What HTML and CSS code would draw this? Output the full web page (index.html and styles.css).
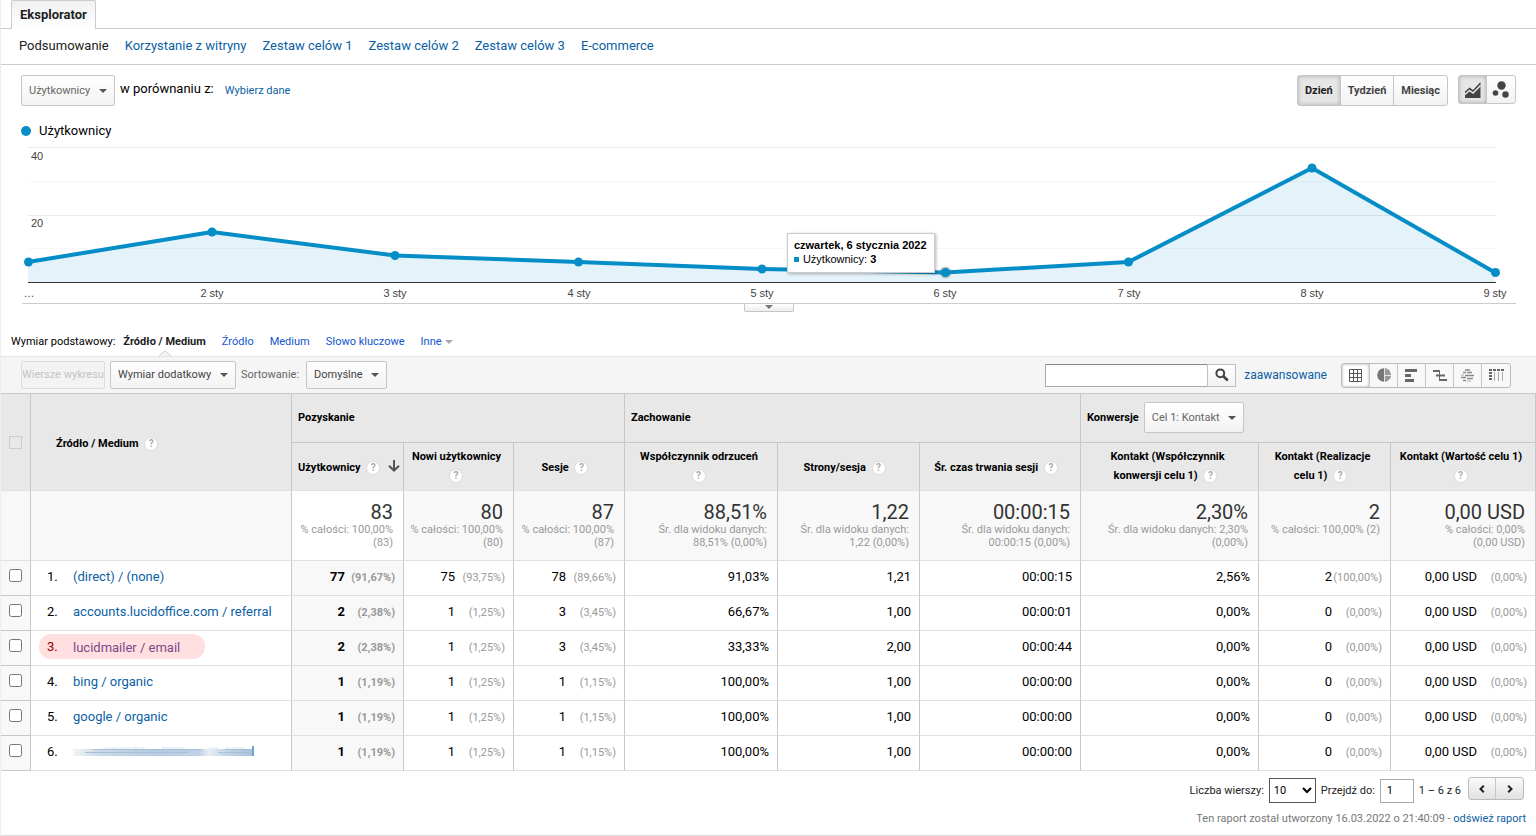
FILE: index.html
```html
<!DOCTYPE html>
<html lang="pl">
<head>
<meta charset="utf-8">
<title>Eksplorator</title>
<link rel="stylesheet" href="styles.css">
</head>
<body>
<main class="report">
  <div class="tabs"><button class="tab" type="button">Eksplorator</button></div>
  <nav class="subnav">
    <span>Podsumowanie</span>
    <a href="#">Korzystanie z witryny</a>
    <a href="#">Zestaw celów 1</a>
    <a href="#">Zestaw celów 2</a>
    <a href="#">Zestaw celów 3</a>
    <a href="#">E-commerce</a>
  </nav>

  <section class="controls">
    <select class="drop drop-tall" id="metric" aria-label="Dane"><option>Użytkownicy</option></select>
    <label class="versus" for="metric">w porównaniu z:</label>
    <a class="pick" href="#">Wybierz dane</a>
    <div class="segments">
      <button class="on" type="button">Dzień</button>
      <button type="button">Tydzień</button>
      <button type="button">Miesiąc</button>
    </div>
    <div class="modes">
      <button class="on" type="button" aria-label="Wykres liniowy"><svg width="16" height="16" viewBox="0 0 16 16"><path d="M0 9.500L4.500 5.500L8 8L15.500 0V16H0Z" fill="#444"/><path d="M0 12.500L4.500 8.500L8 11L15.500 3.500" fill="none" stroke="#eee" stroke-width="1.400"/></svg></button>
      <button type="button" aria-label="Wykres ruchu"><svg width="18" height="18" viewBox="0 0 18 18" fill="#444"><circle cx="9.500" cy="4.500" r="4.200"/><circle cx="3.500" cy="12" r="2.800"/><circle cx="13.500" cy="13.500" r="3.200"/></svg></button>
    </div>
  </section>

  <div class="legend"><i></i>Użytkownicy</div>

  <figure class="chart">
    <svg viewBox="1 140 1535 163" role="img" aria-label="Użytkownicy według dni">
      <g stroke="#f7f7f7"><path d="M28 181.500H1496M28 248.500H1496"/></g>
      <g stroke="#e9e9e9"><path d="M28 147.500H1496M28 215.500H1496"/></g>
      <path d="M28 262L212 232L395 255.500L578.500 262L762 269L945 272.500L1128.500 262L1312 168L1495 272.500V282H28Z" fill="#058dc7" fill-opacity=".11"/>
      <path d="M28 282.500H1496" stroke="#333"/>
      <path d="M28 262L212 232L395 255.500L578.500 262L762 269L945 272.500L1128.500 262L1312 168L1495 272.500" fill="none" stroke="#058dc7" stroke-width="4" stroke-linejoin="round"/>
      <circle cx="945.500" cy="272.500" r="6" fill="#777" fill-opacity=".4"/>
      <g fill="#058dc7"><circle cx="28.500" cy="262" r="4.500"/><circle cx="212" cy="232" r="4.500"/><circle cx="395" cy="255.500" r="4.500"/><circle cx="578.500" cy="262" r="4.500"/><circle cx="762" cy="269" r="4.500"/><circle cx="945.500" cy="272.500" r="4.500"/><circle cx="1128.500" cy="262" r="4.500"/><circle cx="1312" cy="168" r="4.500"/><circle cx="1495.500" cy="272.500" r="4.500"/></g>
      <g class="axis"><text x="31" y="160">40</text><text x="31" y="227">20</text></g>
      <g class="axis mid"><text x="29" y="297">…</text><text x="212" y="297">2 sty</text><text x="395" y="297">3 sty</text><text x="579" y="297">4 sty</text><text x="762" y="297">5 sty</text><text x="945" y="297">6 sty</text><text x="1129" y="297">7 sty</text><text x="1312" y="297">8 sty</text><text x="1495" y="297">9 sty</text></g>
    </svg>
    <div class="tip"><b>czwartek, 6 stycznia 2022</b><span><i></i>Użytkownicy: <b>3</b></span></div>
  </figure>
  <div class="rule"><button type="button" aria-label="Zwiń wykres"><svg width="8" height="4" viewBox="0 0 8 4"><path d="M0 0H8L4 4Z" fill="#777"/></svg></button></div>

  <div class="dims">
    <span>Wymiar podstawowy:</span>
    <b>Źródło / Medium<svg width="12" height="6" viewBox="0 0 12 6"><path d="M0 6L6 .500L12 6" fill="#f5f5f5" stroke="#ccc"/></svg></b>
    <a href="#">Źródło</a>
    <a href="#">Medium</a>
    <a href="#">Słowo kluczowe</a>
    <a href="#">Inne<svg width="8" height="4" viewBox="0 0 8 4"><path d="M0 0H8L4 4Z" fill="#aaa"/></svg></a>
  </div>

  <div class="bar">
    <button class="rowsbtn" type="button" disabled>Wiersze wykresu</button>
    <select class="drop" aria-label="Wymiar dodatkowy"><option>Wymiar dodatkowy</option></select>
    <label for="sort">Sortowanie:</label>
    <select class="drop" id="sort"><option>Domyślne</option></select>
    <form class="search">
      <input type="text" aria-label="Szukaj">
      <button type="button" aria-label="Szukaj"><svg width="14" height="14" viewBox="0 0 14 14" fill="none" stroke="#444"><circle cx="5.300" cy="5.300" r="3.900" stroke-width="2"/><path d="M8.300 8.300L12.800 12.500" stroke-width="2.600"/></svg></button>
    </form>
    <a class="adv" href="#">zaawansowane</a>
    <div class="views">
      <button class="on" type="button" aria-label="Tabela"><svg width="13" height="13" viewBox="0 0 13 13"><path d="M.500 .500H12.500V12.500H.500ZM.500 4.500H12.500M.500 8.500H12.500M4.500 0V13M8.500 0V13" fill="#fff" stroke="#555"/></svg></button>
      <button type="button" aria-label="Procent"><svg width="14" height="14" viewBox="0 0 14 14"><circle cx="7" cy="7" r="6.800" fill="#777"/><path d="M7 7V.200A6.800 6.800 0 0 1 7 13.800Z" fill="#999"/><path d="M7.500 0V14M7.500 7.500H14" stroke="#e4e4e4"/></svg></button>
      <button type="button" aria-label="Skuteczność"><svg width="13" height="13" viewBox="0 0 13 13"><path d="M0 1.500H12M0 6.500H6M0 11.500H9" stroke="#666" stroke-width="3"/></svg></button>
      <button type="button" aria-label="Porównanie"><svg width="14" height="13" viewBox="0 0 14 13"><path d="M0 2H6M3 6.500H12M7 11H14" stroke="#666" stroke-width="2"/><path d="M6.500 1V12" stroke="#666"/></svg></button>
      <button type="button" aria-label="Chmura haseł"><svg width="13" height="13" viewBox="0 0 13 13"><path d="M4 1H9M2 3.500H5M6 3.500H11M4 6.500H13M0 8.500H5M6 9.500H12M2 11.500H5" stroke="#888" stroke-width="1.400"/><path d="M0 6H3M6 12H10" stroke="#aaa"/></svg></button>
      <button type="button" aria-label="Tabela przestawna"><svg width="15" height="12" viewBox="0 0 15 12"><path d="M0 1H15" stroke="#666" stroke-width="2" stroke-dasharray="3 1"/><path d="M1.500 3V12" stroke="#666" stroke-width="3" stroke-dasharray="2 1"/><path d="M5.500 3V12M9.500 3V12M13.500 3V12" stroke="#aaa"/></svg></button>
    </div>
  </div>

  <table class="data">
    <colgroup><col class="w30"><col class="w261"><col class="w112"><col class="w110"><col class="w111"><col class="w153"><col class="w142"><col class="w161"><col class="w178"><col class="w132"><col class="w145"></colgroup>
    <thead>
      <tr class="groups">
        <th rowspan="2" class="pickcell"><input type="checkbox" disabled aria-label="Zaznacz wszystko"></th>
        <th rowspan="2" class="srchead">Źródło / Medium <i class="q">?</i></th>
        <th colspan="3">Pozyskanie</th>
        <th colspan="3">Zachowanie</th>
        <th colspan="3"><div class="conv"><label for="goal">Konwersje</label><select class="drop drop-tall" id="goal"><option>Cel 1: Kontakt</option></select></div></th>
      </tr>
      <tr class="metrics">
        <th class="tight">Użytkownicy <i class="q">?</i><svg class="down" width="12" height="12" viewBox="0 0 12 12"><path d="M6 0V10M1 5.700L6 10.500L11 5.700" fill="none" stroke="#555" stroke-width="2"/></svg></th>
        <th>Nowi użytkownicy <i class="q">?</i></th>
        <th class="one">Sesje <i class="q">?</i></th>
        <th>Współczynnik odrzuceń <i class="q">?</i></th>
        <th class="one">Strony/sesja <i class="q">?</i></th>
        <th class="one">Śr. czas trwania sesji <i class="q">?</i></th>
        <th>Kontakt (Współczynnik konwersji celu 1) <i class="q">?</i></th>
        <th>Kontakt (Realizacje celu 1) <i class="q">?</i></th>
        <th>Kontakt (Wartość celu 1) <i class="q">?</i></th>
      </tr>
    </thead>
    <tbody>
      <tr class="total">
        <td></td><td></td>
        <td class="sorted"><strong>83</strong>% całości: 100,00%<br>(83)</td>
        <td><strong>80</strong>% całości: 100,00%<br>(80)</td>
        <td><strong>87</strong>% całości: 100,00%<br>(87)</td>
        <td><strong>88,51%</strong>Śr. dla widoku danych:<br>88,51% (0,00%)</td>
        <td><strong>1,22</strong>Śr. dla widoku danych:<br>1,22 (0,00%)</td>
        <td><strong>00:00:15</strong>Śr. dla widoku danych:<br>00:00:15 (0,00%)</td>
        <td><strong>2,30%</strong>Śr. dla widoku danych: 2,30%<br>(0,00%)</td>
        <td><strong>2</strong>% całości: 100,00% (2)</td>
        <td><strong>0,00 USD</strong>% całości: 0,00%<br>(0,00 USD)</td>
      </tr>
      <tr><td class="pickcell"><input type="checkbox" aria-label="Wiersz 1"></td><td class="src"><span class="no">1.</span><a href="#">(direct) / (none)</a></td><td class="sorted">77<small>(91,67%)</small></td><td>75<small>(93,75%)</small></td><td>78<small>(89,66%)</small></td><td>91,03%</td><td>1,21</td><td>00:00:15</td><td>2,56%</td><td>2<small>(100,00%)</small></td><td>0,00 USD<small>(0,00%)</small></td></tr>
      <tr><td class="pickcell"><input type="checkbox" aria-label="Wiersz 2"></td><td class="src"><span class="no">2.</span><a href="#">accounts.lucidoffice.com / referral</a></td><td class="sorted">2<small>(2,38%)</small></td><td>1<small>(1,25%)</small></td><td>3<small>(3,45%)</small></td><td>66,67%</td><td>1,00</td><td>00:00:01</td><td>0,00%</td><td>0<small>(0,00%)</small></td><td>0,00 USD<small>(0,00%)</small></td></tr>
      <tr><td class="pickcell"><input type="checkbox" aria-label="Wiersz 3"></td><td class="src"><span class="marked"><span class="no">3.</span><a href="#">lucidmailer / email</a></span></td><td class="sorted">2<small>(2,38%)</small></td><td>1<small>(1,25%)</small></td><td>3<small>(3,45%)</small></td><td>33,33%</td><td>2,00</td><td>00:00:44</td><td>0,00%</td><td>0<small>(0,00%)</small></td><td>0,00 USD<small>(0,00%)</small></td></tr>
      <tr><td class="pickcell"><input type="checkbox" aria-label="Wiersz 4"></td><td class="src"><span class="no">4.</span><a href="#">bing / organic</a></td><td class="sorted">1<small>(1,19%)</small></td><td>1<small>(1,25%)</small></td><td>1<small>(1,15%)</small></td><td>100,00%</td><td>1,00</td><td>00:00:00</td><td>0,00%</td><td>0<small>(0,00%)</small></td><td>0,00 USD<small>(0,00%)</small></td></tr>
      <tr><td class="pickcell"><input type="checkbox" aria-label="Wiersz 5"></td><td class="src"><span class="no">5.</span><a href="#">google / organic</a></td><td class="sorted">1<small>(1,19%)</small></td><td>1<small>(1,25%)</small></td><td>1<small>(1,15%)</small></td><td>100,00%</td><td>1,00</td><td>00:00:00</td><td>0,00%</td><td>0<small>(0,00%)</small></td><td>0,00 USD<small>(0,00%)</small></td></tr>
      <tr><td class="pickcell"><input type="checkbox" aria-label="Wiersz 6"></td><td class="src"><span class="no">6.</span><svg class="smear" width="182" height="12" viewBox="0 0 182 12"><defs><linearGradient id="s"><stop offset="0" stop-color="#f2f4f8"/><stop offset=".15" stop-color="#ccd9e7"/><stop offset=".35" stop-color="#bccfe2"/><stop offset=".5" stop-color="#b4cbe1"/><stop offset=".7" stop-color="#bdd0e4"/><stop offset=".76" stop-color="#e6edf5"/><stop offset=".85" stop-color="#c4d5e6"/><stop offset="1" stop-color="#a9c2dc"/></linearGradient></defs><path d="M30 2H72M90 2H112M135 2H145M152 2H172" stroke="#eef3f8" stroke-width="2"/><path d="M40 1V10M63 0V10M90 0V10" stroke="#dbe6f0"/><rect y="3" width="179" height="7" fill="url(#s)"/><path d="M20 3.500H128M152 3.500H178" stroke="#a4bfd9"/><path d="M12 6.500H115M145 6.500H178" stroke="#a6c0da"/><path d="M50 8H125" stroke="#c9d9e8" stroke-dasharray="2 2"/><path d="M180 0V10" stroke="#6fa0d8" stroke-width="2"/></svg></td><td class="sorted">1<small>(1,19%)</small></td><td>1<small>(1,25%)</small></td><td>1<small>(1,15%)</small></td><td>100,00%</td><td>1,00</td><td>00:00:00</td><td>0,00%</td><td>0<small>(0,00%)</small></td><td>0,00 USD<small>(0,00%)</small></td></tr>
    </tbody>
  </table>

  <footer class="foot">
    <div class="pager">
      <label for="count">Liczba wierszy:</label>
      <select id="count"><option>10</option></select>
      <label for="goto">Przejdź do:</label>
      <input id="goto" type="text" value="1">
      <span>1 – 6 z 6</span>
      <div class="arrows">
        <button type="button" aria-label="Poprzednia"><svg width="6" height="8" viewBox="0 0 6 8"><path d="M4.800 .700L1.500 4L4.800 7.300" fill="none" stroke="#222" stroke-width="2"/></svg></button>
        <button type="button" aria-label="Następna"><svg width="6" height="8" viewBox="0 0 6 8"><path d="M1.200 .700L4.500 4L1.200 7.300" fill="none" stroke="#222" stroke-width="2"/></svg></button>
      </div>
    </div>
    <p>Ten raport został utworzony 16.03.2022 o 21:40:09 - <a href="#">odśwież raport</a></p>
  </footer>
</main>
</body>
</html>
```

FILE: styles.css
```css
* { box-sizing: border-box; }
body { margin: 0; background: #fff; color: #222; font: 13px/16px Roboto, sans-serif; }
a { color: #0b5fa5; text-decoration: none; }
button, input, select { font: inherit; margin: 0; }
button { cursor: pointer; display: flex; align-items: center; justify-content: center; padding: 0; color: #444; }
svg { display: block; }
.report { border-left: 1px solid #eee; border-bottom: 1px solid #ddd; }

.tabs { display: flex; padding-left: 10px; height: 29px; border-bottom: 1px solid #ccc; }
.tab { height: 29px; padding: 0 8px; border: 1px solid #ccc; border-bottom: 0; border-radius: 2px 2px 0 0; background: linear-gradient(#f1f1f1, #fff); color: #222; font-weight: bold; }
.subnav { display: flex; gap: 16px; padding: 9px 18px 10px; border-bottom: 1px solid #ccc; }

.controls { display: flex; align-items: flex-start; padding: 10px 20px 0; height: 55px; }
.drop { appearance: none; height: 28px; padding: 0 23px 0 7px; border: 1px solid #c6c6c6; border-radius: 2px; color: #444; font-size: 11px; font-weight: normal; background: url("data:image/svg+xml,%3Csvg xmlns='http://www.w3.org/2000/svg' width='8' height='4'%3E%3Cpath d='M0 0H8L4 4Z' fill='%23555'/%3E%3C/svg%3E") no-repeat right 7px center, linear-gradient(#fff, #f2f2f2); }
.drop-tall { height: 31px; color: #666; }
.versus { margin: 6px 0 0 5px; color: #000; }
.pick { margin: 8px 0 0 11px; font-size: 11px; }
.segments, .modes, .views, .arrows { display: flex; border: 1px solid #c6c6c6; border-radius: 3px; background: linear-gradient(#fff, #f2f2f2); }
.segments button, .modes button, .views button, .arrows button { border: 0; border-right: 1px solid #c6c6c6; background: none; }
.segments button:last-child, .modes button:last-child, .views button:last-child, .arrows button:last-child { border-right: 0; }
.segments { margin-left: auto; height: 31px; }
.segments button { padding: 0 7px; font-size: 11px; font-weight: bold; }
.segments .on, .modes .on { background: #e6e6e6; box-shadow: inset 0 0 4px #aaa; color: #222; }
.modes { margin-left: 10px; height: 29px; }
.modes button { width: 28px; }

.legend { display: flex; align-items: center; gap: 8px; padding: 3px 20px 1px; color: #000; }
.legend i { width: 10px; height: 10px; border-radius: 50%; background: #058dc7; }

.chart { position: relative; margin: 0; }
.chart > svg { width: 100%; height: auto; }
.axis { font: 11px "Liberation Sans", Arial, sans-serif; fill: #444; }
.mid { text-anchor: middle; }
.tip { position: absolute; left: 51.2%; top: 57%; padding: 4px 7px 6px 6px; border: 1px solid #ccc; background: #fff; box-shadow: 1px 1px 3px rgba(0, 0, 0, .3); color: #000; font: 11px/14px "Liberation Sans", Arial, sans-serif; white-space: nowrap; }
.tip > * { display: block; }
.tip i { display: inline-block; width: 5px; height: 5px; margin-right: 4px; background: #058dc7; vertical-align: 1px; }
.rule { display: flex; justify-content: center; margin: 0 20px 0 21px; height: 31px; border-top: 1px solid #ccc; }
.rule button { align-items: flex-start; width: 50px; height: 8px; padding-top: 1px; border: 1px solid #c6c6c6; border-top: 0; border-radius: 0 0 2px 2px; background: linear-gradient(#fff, #eee); }

.dims { display: flex; gap: 16px; height: 22px; padding-left: 10px; font-size: 11px; }
.dims > span { margin-right: -8px; color: #000; }
.dims b { position: relative; }
.dims b svg { position: absolute; left: 50%; bottom: 0; margin-left: -6px; }
.dims a { display: flex; color: #15c; }
.dims a svg { margin: 6px 0 0 3px; }

.bar { display: flex; align-items: center; height: 37px; padding: 0 25px 0 20px; border-top: 1px solid #e5e5e5; background: #f5f5f5; font-size: 11px; color: #666; gap: 5px; }
.rowsbtn { width: 84px; height: 28px; border: 1px solid #ddd; border-radius: 2px; background: #f3f3f3; color: #c4c4c4; white-space: nowrap; }
.bar label { margin-right: 2px; }
.search { display: flex; margin-left: auto; }
.search input { width: 162px; height: 23px; border: 1px solid #aaa; border-top-color: #888; border-right: 0; background: #fff; }
.search button { width: 29px; height: 23px; border: 1px solid #c0c0c0; background: linear-gradient(#fff, #f2f2f2); }
.adv { margin: 0 9px 0 3px; font-size: 12px; }
.views { height: 25px; border-color: #bbb; background: #f8f8f8; }
.views button { width: 28px; }
.views .on { background: #fff; box-shadow: inset 0 0 3px #aaa; }

.data { width: 100%; table-layout: fixed; border-spacing: 0; border-top: 1px solid #c8c8c8; color: #000; }
.w30 { width: 30px; } .w261 { width: 261px; } .w112 { width: 112px; } .w110 { width: 110px; } .w111 { width: 111px; }
.w153 { width: 153px; } .w142 { width: 142px; } .w161 { width: 161px; } .w178 { width: 178px; } .w132 { width: 132px; } .w145 { width: 145px; }
.data th { padding: 0 10px 2px 6px; border-right: 1px solid #c8c8c8; border-bottom: 1px solid #e0e0e0; background: #e8e8e8; font-size: 11px; line-height: 19px; }
.data .groups th { height: 49px; padding: 0 6px; text-align: left; }
.data .groups th[colspan] { padding-bottom: 1px; border-bottom-color: #c8c8c8; }
.data .groups .srchead { padding: 2px 0 0 25px; }
.data .metrics th { height: 48px; }
.data .metrics .one { padding-top: 2px; padding-bottom: 0; }
.data .metrics .tight { padding: 2px 0 0 6px; text-align: left; white-space: nowrap; }
.conv { display: flex; align-items: center; gap: 5px; }
.q { display: inline-block; width: 14px; height: 14px; margin: 0 4px 0 3px; border: 1px solid #ddd; border-radius: 50%; background: #fff; color: #aaa; font-size: 10px; font-style: normal; line-height: 12px; text-align: center; vertical-align: 0; }
.down { display: inline-block; margin-left: 4px; vertical-align: -1px; }
.data td { height: 35px; padding: 0 8px 2px 0; border-right: 1px solid #c8c8c8; border-bottom: 1px solid #e0e0e0; text-align: right; white-space: nowrap; }
.data .pickcell { background: #f8f8f8; text-align: center; }
.data th.pickcell { background: #e8e8e8; }
.data .groups .pickcell { padding: 0; text-align: center; }
.data td.pickcell { padding: 0 0 5px; border-bottom-color: #c8c8c8; }
.pickcell input { display: block; width: 13px; height: 13px; margin: 0 auto 0 8px; }
.pickcell input:disabled { appearance: none; border: 1px solid #ccc; }
.data .src { text-align: left; padding: 0 0 3px 8px; }
.src a { vertical-align: middle; }
.no { display: inline-block; width: 26px; margin-left: 8px; vertical-align: middle; }
.marked { display: inline-block; width: 166px; padding: 5px 0 4px; border-radius: 12px; background: #ffdfe0; color: #900; vertical-align: middle; }
.marked a { color: #7b4a8a; }
.smear { display: inline-block; vertical-align: middle; }
.data small { display: inline-block; width: 50px; color: #999; font-size: 11px; text-align: right; }
.data .sorted { background: #f8f8f8; font-weight: bold; }
.data .total td { height: 70px; padding: 10px 10px 0 0; background: #f8f8f8; color: #999; font-size: 11px; line-height: 13px; vertical-align: top; }
.data .total .sorted { background: #fff; font-weight: normal; }
.total strong { display: block; color: #333; font-size: 20px; font-weight: normal; line-height: 22px; }

.foot { padding: 6px 10px 8px 0; font-size: 11px; color: #222; }
.pager { display: flex; align-items: center; justify-content: flex-end; gap: 5px; height: 27px; }
.pager select { width: 47px; height: 25px; border: 1px solid #555; border-radius: 0; background: #fff; }
.pager input { width: 34px; height: 24px; padding: 0 6px; border: 1px solid #aaa; }
.arrows { height: 23px; margin: 0 2px 4px; border-color: #bbb; background: linear-gradient(#fafafa, #e2e2e2); }
.arrows button { width: 27px; }
.foot p { margin: 7px 0 0; color: #777; text-align: right; }
```
